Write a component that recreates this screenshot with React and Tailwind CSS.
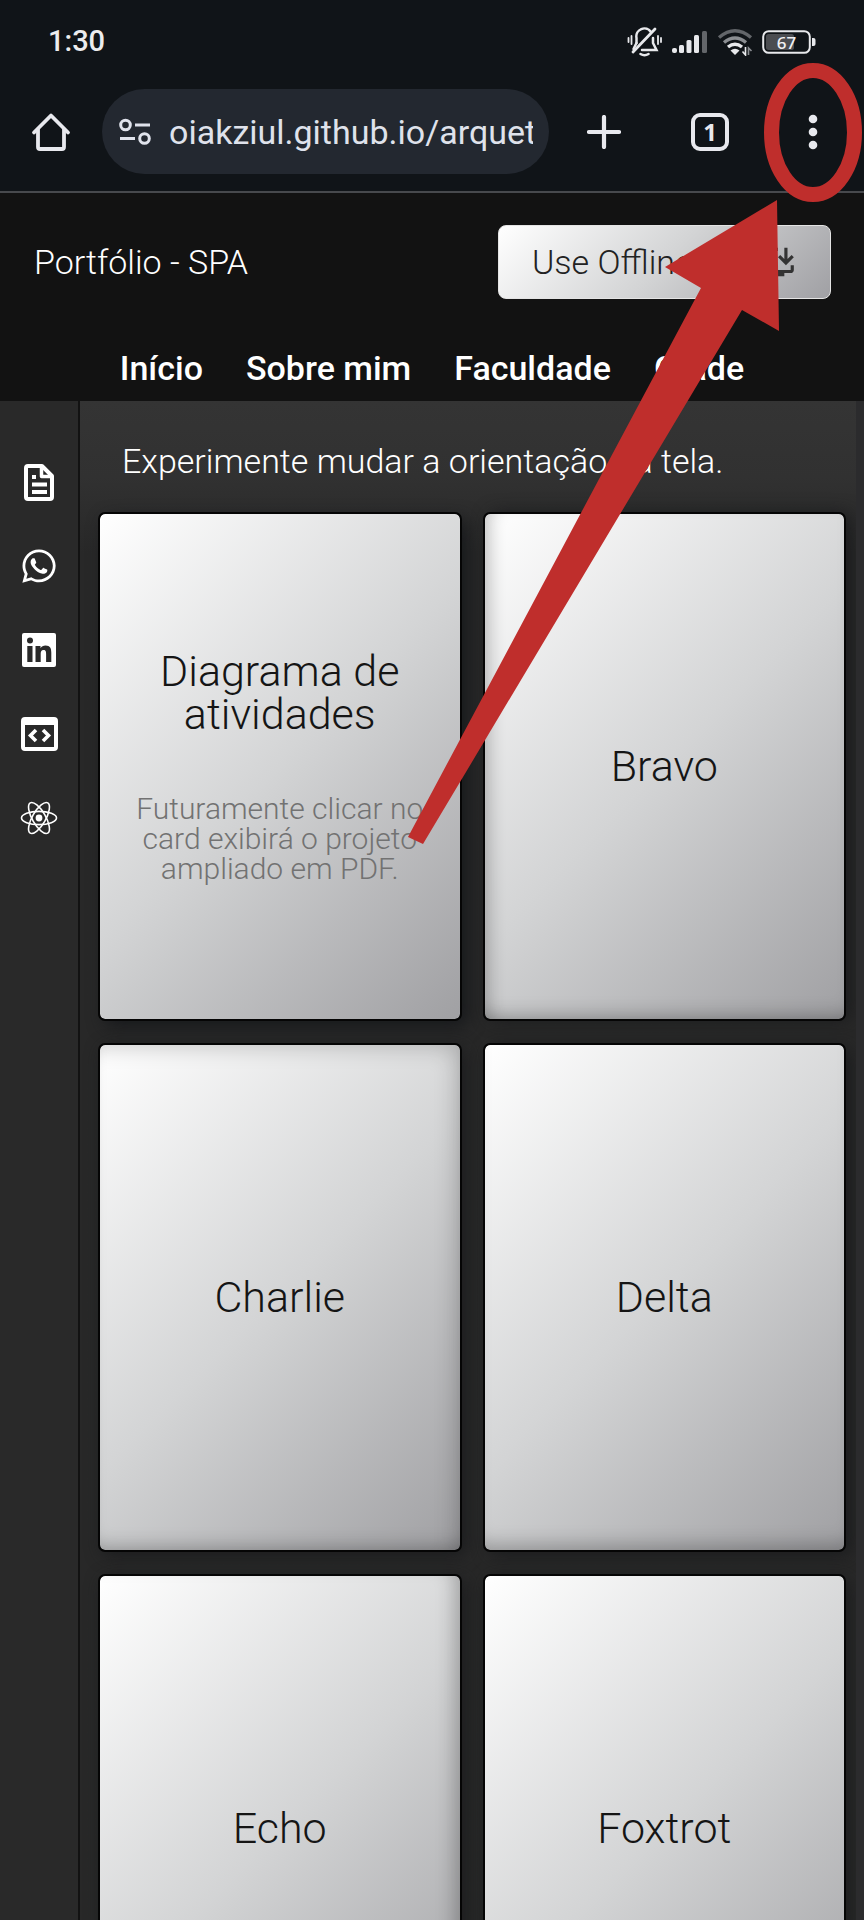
import React from "react";
import { FaWhatsapp } from "react-icons/fa";
import { MdInstallDesktop } from "react-icons/md";

const cards = [
  {
    title: "Diagrama de atividades",
    text: "Futuramente clicar no card exibirá o projeto ampliado em PDF.",
    shade: "shadow-[6px_6px_18px_#15171a]",
  },
  { title: "Bravo", shade: "shadow-[inset_16px_0_16px_-10px_rgba(0,0,0,0.2),inset_0_-16px_18px_-12px_rgba(0,0,0,0.25),6px_0_18px_#191a1c]" },
  { title: "Charlie", shade: "shadow-[inset_-12px_10px_22px_-8px_rgba(0,0,0,0.2),inset_0_-16px_18px_-12px_rgba(0,0,0,0.25),4px_4px_18px_#191a1c]" },
  { title: "Delta", shade: "shadow-[inset_0_-18px_18px_-12px_rgba(0,0,0,0.25),6px_4px_18px_#191a1c]" },
  { title: "Echo", shade: "shadow-[inset_-18px_0_18px_-12px_rgba(0,0,0,0.25),4px_4px_18px_#191a1c]" },
  { title: "Foxtrot", shade: "shadow-[4px_4px_18px_#191a1c]" },
];

function BellOff() {
  return (
    <svg width="36" height="30" viewBox="0 0 36 30" fill="none" stroke="#e8e9ec" strokeWidth="2.500" strokeLinecap="round" aria-hidden="true">
      <path d="M9.500 16V11a8 8 0 0 1 14.500-6M26 11v5l3.500 7H15" />
      <path d="M6 25 28 2" strokeWidth="2.800" />
      <path d="M9.500 16l-3 6" />
      <path d="M13.500 27q4 2.500 8 0" />
      <path d="M1.500 11v4M4.500 9v8M31 9v8M34 11v4" strokeWidth="1.800" />
    </svg>
  );
}

function Signal() {
  return (
    <svg width="36" height="24" viewBox="0 0 36 24" fill="#e8e9ec" aria-hidden="true">
      <rect x="0" y="18" width="5" height="5" rx="2" />
      <rect x="7" y="15" width="5" height="8" rx="1.500" />
      <rect x="14.500" y="10" width="5" height="13" rx="1.500" />
      <rect x="22" y="5" width="5" height="18" rx="1.500" />
      <rect x="30" y="1" width="5" height="22" rx="1.500" fill="#63666a" />
    </svg>
  );
}

function Wifi() {
  return (
    <svg width="36" height="28" viewBox="0 0 36 28" fill="none" strokeWidth="3.400" aria-hidden="true">
      <path d="M2 9.500Q18-4 34 9.500" stroke="#63666a" />
      <path d="M7 14.500Q18 5.500 29 14.500" stroke="#8b8e92" />
      <path d="M11 19Q18 13.500 25 19" stroke="#e8e9ec" />
      <path d="M13.500 22.500Q18 19 22.500 22.500L18 27z" fill="#e8e9ec" />
      <path d="M28.500 19v8l-3-3.500" stroke="#e8e9ec" strokeWidth="1.600" />
      <path d="M31.500 27v-7l3 3" stroke="#8b8e92" strokeWidth="1.600" />
    </svg>
  );
}

function Battery() {
  return (
    <svg width="54" height="24" viewBox="0 0 54 24" aria-hidden="true">
      <rect x="1.200" y="1.200" width="46.600" height="21.600" rx="5.500" fill="none" stroke="#e8e9ec" strokeWidth="2" />
      <rect x="4" y="4" width="28" height="16" rx="2.500" fill="#4b4d51" />
      <path d="M50 8h1.500q2 0 2 2v4q0 2-2 2H50z" fill="#e8e9ec" />
      <text x="24.500" y="18.500" textAnchor="middle" fontFamily="Noto Sans, sans-serif" fontWeight="500" fontSize="17" fill="#f1f1f3">67</text>
    </svg>
  );
}

function Home() {
  return (
    <svg width="40" height="40" viewBox="0 0 40 40" fill="none" stroke="#e8e9ee" strokeWidth="3.800" strokeLinejoin="round" strokeLinecap="round" aria-hidden="true">
      <path d="M3 20.500 20 3.500 37 20.500" />
      <path d="M7 17.500V35q0 2 2 2H31q2 0 2-2V17.500" />
    </svg>
  );
}

function Tune() {
  return (
    <svg width="32" height="28" viewBox="0 0 32 28" fill="none" stroke="#e0e3ec" strokeWidth="3" aria-hidden="true">
      <circle cx="6.500" cy="7" r="4.800" />
      <path d="M16 7H31" />
      <circle cx="25.500" cy="20.500" r="4.800" />
      <path d="M1 20.500H16" />
    </svg>
  );
}

function FileIcon() {
  return (
    <svg width="30" height="37" viewBox="0 0 30 37" fill="none" stroke="#fff" strokeWidth="4" strokeLinejoin="round" aria-hidden="true">
      <path d="M2 4q0-2 2-2H18L28 12V33q0 2-2 2H4q-2 0-2-2z" />
      <path d="M17.500 3v9.500H27" strokeWidth="3.500" />
      <path d="M8 13h4M8 20.500H23M8 28H23" />
    </svg>
  );
}

function LinkedInIcon() {
  return (
    <svg width="34" height="34" viewBox="0 0 34 34" aria-hidden="true">
      <rect width="34" height="34" rx="2" fill="#fff" />
      <g fill="#292929">
        <circle cx="8" cy="7.500" r="3" />
        <path d="M5.300 13h5.200v16H5.300zM13.500 13h5v2.200c1-1.700 2.800-2.700 5-2.700 4.800 0 5.800 3 5.800 7.300V29h-5.200v-8c0-2-.2-4-2.600-4s-2.800 1.800-2.800 3.900V29h-5.200z" />
      </g>
    </svg>
  );
}

function CodeIcon() {
  return (
    <svg width="37" height="34" viewBox="0 0 37 34" fill="none" stroke="#fff" strokeWidth="4" aria-hidden="true">
      <rect x="2" y="2" width="33" height="30" rx="2" />
      <path d="M2 5.500H35" strokeWidth="5" />
      <path d="M15 13 9.500 18.500 15 24M22 13l5.500 5.500L22 24" strokeWidth="3.600" />
    </svg>
  );
}

function ReactIcon() {
  return (
    <svg width="38" height="36" viewBox="-19 -18 38 36" fill="none" stroke="#fff" strokeWidth="1.600" aria-hidden="true">
      <circle r="3.400" fill="#fff" stroke="none" />
      <ellipse rx="17.500" ry="6.600" />
      <ellipse rx="17.500" ry="6.600" transform="rotate(60)" />
      <ellipse rx="17.500" ry="6.600" transform="rotate(120)" />
    </svg>
  );
}

const links = [
  { label: "Currículo", icon: <FileIcon /> },
  { label: "WhatsApp", icon: <FaWhatsapp size={38} color="#fff" aria-hidden="true" /> },
  { label: "LinkedIn", icon: <LinkedInIcon /> },
  { label: "Código", icon: <CodeIcon /> },
  { label: "React", icon: <ReactIcon /> },
];

function Browser() {
  return (
    <div className="border-b-2 border-[#47494d] bg-[#101418]">
      <div className="flex h-[84px] items-center justify-between px-12 text-[29px] font-medium text-[#ececee]">
        <span>1:30</span>
        <div className="flex items-center gap-[9px]">
          <BellOff />
          <Signal />
          <Wifi />
          <Battery />
        </div>
      </div>
      <div className="flex h-[107px] items-center pb-3 pl-[31px]">
        <button aria-label="Página inicial" className="mr-[31px] shrink-0"><Home /></button>
        <div className="flex h-[85px] min-w-0 flex-1 items-center gap-[18px] rounded-full bg-[#232830] pr-4 pl-[17px]">
          <button aria-label="Informações do site" className="shrink-0"><Tune /></button>
          <input
            aria-label="Endereço"
            defaultValue="oiakziul.github.io/arquetipo"
            className="h-[60px] w-full min-w-0 bg-transparent text-[34px] text-[#dfe2eb] outline-none"
          />
        </div>
        <div className="flex w-[315px] shrink-0 items-center pl-[38px]">
          <button aria-label="Nova guia" className="w-[34px]">
            <svg width="34" height="34" viewBox="0 0 34 34" stroke="#e8e9ee" strokeWidth="4.200" strokeLinecap="round" aria-hidden="true"><path d="M17 2V32M2 17H32" /></svg>
          </button>
          <button aria-label="Guias abertas" className="ml-[70px] flex size-[38px] items-center justify-center rounded-[9px] border-4 border-[#e8e9ee] font-['Open_Sans',sans-serif] text-2xl font-bold text-[#e8e9ee]">1</button>
          <button aria-label="Mais opções" className="ml-[74px] flex w-5 justify-center">
            <svg width="10" height="36" viewBox="0 0 10 36" fill="#e8e9ee" aria-hidden="true"><circle cx="5" cy="5" r="4.300" /><circle cx="5" cy="18" r="4.300" /><circle cx="5" cy="31" r="4.300" /></svg>
          </button>
        </div>
      </div>
    </div>
  );
}

export default function App() {
  return (
    <div className="relative h-screen overflow-hidden bg-[#292929] font-['Roboto',sans-serif]">
      <div className="flex h-full flex-col">
        <Browser />
        <header className="bg-[#121212] pt-8 pb-[13px] text-[34px] text-white">
          <div className="flex items-center justify-between pr-[33px] pl-[34px]">
            <h1 className="font-light">Portfólio - SPA</h1>
            <button className="flex h-[74px] w-[333px] items-center justify-between rounded-lg border border-[#e4e4e4] bg-linear-135 from-white via-[#d3d4d5] to-[#a0a0a4] px-[33px] font-light text-[#222]">
              Use Offline
              <MdInstallDesktop size={38} color="#333" aria-hidden="true" />
            </button>
          </div>
          <nav className="mt-[49px] flex justify-center gap-[43px] leading-10 font-medium">
            <a href="#inicio">Início</a>
            <a href="#sobre">Sobre mim</a>
            <a href="#faculdade">Faculdade</a>
            <a href="#grade">Grade</a>
          </nav>
        </header>
        <div className="flex min-h-0 flex-1">
          <aside className="flex w-20 shrink-0 flex-col items-center gap-[46px] border-r-2 border-[#121212] bg-[#292929] pt-[62px]">
            {links.map((l) => (
              <a key={l.label} href="#contato" aria-label={l.label} className="flex h-[38px] items-center">{l.icon}</a>
            ))}
          </aside>
          <main className="min-w-0 flex-1 overflow-hidden border-r-8 border-[#2b2b2d] bg-[#2a2a2a] bg-linear-to-b from-[#343434] from-0% via-[#313131] via-5% to-[#282828] to-10% pr-3 pl-5">
            <p className="pt-10 pl-[22px] text-[34px] leading-10 font-light text-white">Experimente mudar a orientação da tela.</p>
            <div className="mt-[33px] grid grid-cols-2 gap-x-[25px] gap-y-[26px]">
              {cards.map((c) => (
                <article key={c.title} className={"flex h-[505px] flex-col items-center justify-center gap-[58px] rounded-[5px] bg-linear-135 from-white via-[#d3d4d5] to-[#a0a0a3] px-7 text-center font-light outline-2 outline-[#050505] " + c.shade}>
                  <h2 className="text-[43px] leading-[43px] text-[#151515]">{c.title}</h2>
                  {c.text && <p className="text-[30px] leading-[30px] text-[#727272]">{c.text}</p>}
                </article>
              ))}
            </div>
          </main>
        </div>
      </div>
      <svg className="pointer-events-none absolute top-0 right-0" width="464" height="860" viewBox="400 0 464 860" aria-hidden="true">
        <ellipse cx="813" cy="132.500" rx="41.500" ry="62" fill="none" stroke="#bf2e2c" strokeWidth="15" />
        <path d="M777 200 779 331 742 310 423 844 408 837 701 288 665 267z" fill="#bf2e2c" />
      </svg>
    </div>
  );
}
